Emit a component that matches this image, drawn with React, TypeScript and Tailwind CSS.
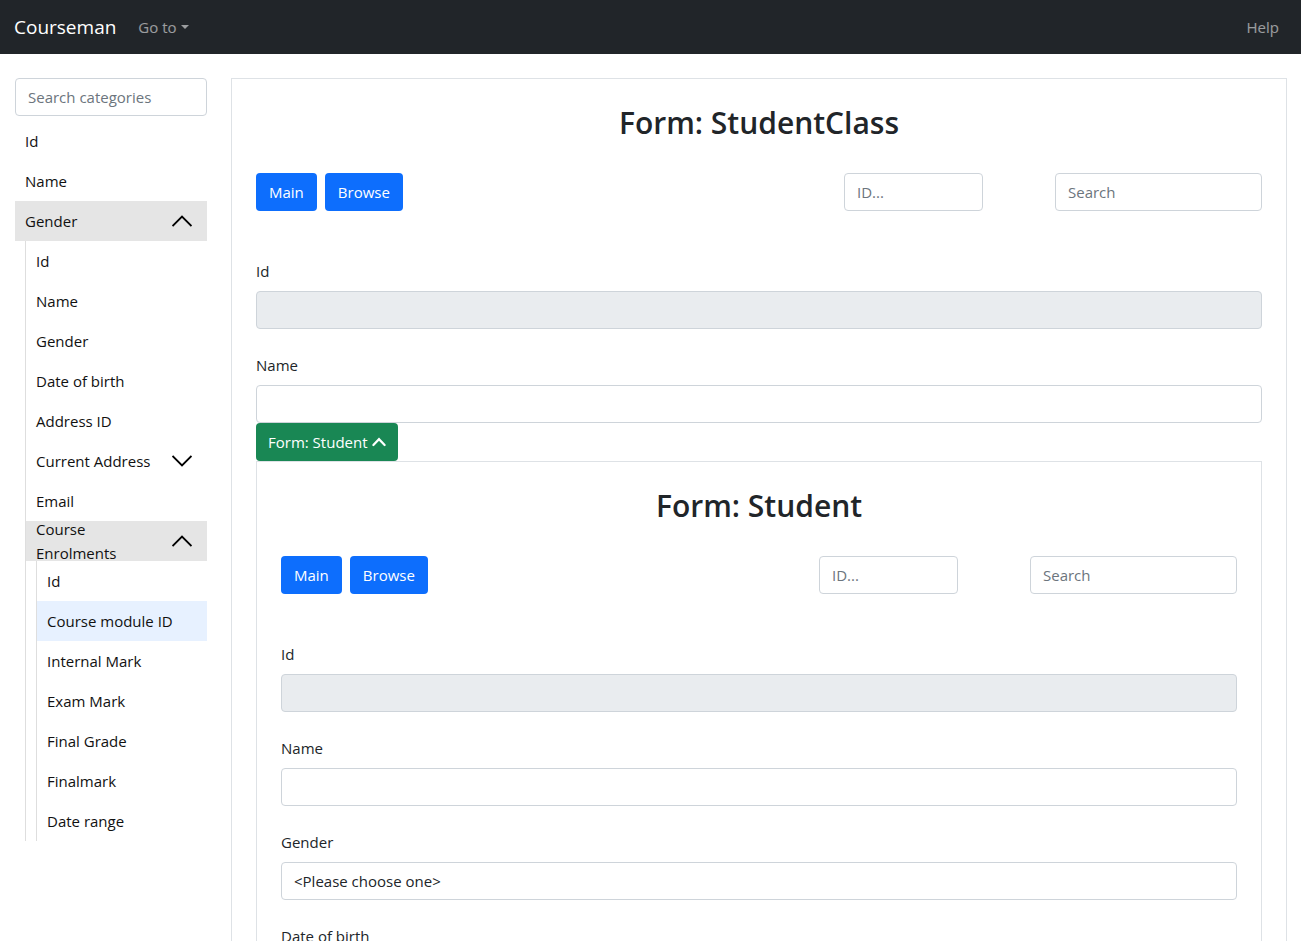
import type { ReactNode } from "react";

const control =
  "block h-[38px] w-full appearance-none rounded border border-[#ced4da] px-3 text-[15px] leading-6 text-[#212529] placeholder:text-[#6c757d]";

function Chevron({ open }: { open: boolean }) {
  return (
    <svg viewBox="0 0 20 20" className="h-5 w-5 shrink-0" fill="none" stroke="#000" strokeWidth="1.9" aria-hidden="true">
      {open ? <path d="M0.5 15 L10 5.5 L19.5 15" /> : <path d="M0.5 5 L10 14.5 L19.5 5" />}
    </svg>
  );
}

function Item({ label, active = false }: { label: string; active?: boolean }) {
  return (
    <li>
      <a href="#" className={`flex h-10 items-center pl-[10px] ${active ? "bg-[#e7f1ff]" : ""}`}>
        {label}
      </a>
    </li>
  );
}

function Group({ label, open = false, children }: { label: string; open?: boolean; children?: ReactNode }) {
  return (
    <li>
      <button
        type="button"
        aria-expanded={open}
        className={`flex h-10 w-full items-center justify-between gap-4 pr-[15px] pl-[10px] text-left leading-6 ${open ? "bg-[#e5e5e5]" : ""}`}
      >
        <span>{label}</span>
        <Chevron open={open} />
      </button>
      {open && <ul className="ml-[10px] border-l border-[#dedede]">{children}</ul>}
    </li>
  );
}

function Sidebar() {
  return (
    <nav className="w-48 shrink-0 text-[15px] leading-6 text-[#111]" aria-label="Categories">
      <input type="text" aria-label="Search categories" placeholder="Search categories" className={control} />
      <ul className="mt-[5px]">
        <Item label="Id" />
        <Item label="Name" />
        <Group label="Gender" open>
          <Item label="Id" />
          <Item label="Name" />
          <Item label="Gender" />
          <Item label="Date of birth" />
          <Item label="Address ID" />
          <Group label="Current Address" />
          <Item label="Email" />
          <Group label="Course Enrolments" open>
            <Item label="Id" />
            <Item label="Course module ID" active />
            <Item label="Internal Mark" />
            <Item label="Exam Mark" />
            <Item label="Final Grade" />
            <Item label="Finalmark" />
            <Item label="Date range" />
          </Group>
        </Group>
      </ul>
    </nav>
  );
}

function PrimaryButton({ children }: { children: ReactNode }) {
  return (
    <button type="button" className="h-[38px] rounded bg-[#0d6efd] px-[13px] text-[15px] leading-6 text-white">
      {children}
    </button>
  );
}

function Field({ id, label, children }: { id: string; label: string; children: ReactNode }) {
  return (
    <div>
      <label htmlFor={id} className="mb-2 block w-fit text-[15px] leading-6">
        {label}
      </label>
      {children}
    </div>
  );
}

function FormPanel({ title, children }: { title: string; children: ReactNode }) {
  return (
    <section className="border border-[#dee2e6] p-6">
      <h2 className="text-center text-[30px] leading-[40px] font-semibold">{title}</h2>
      <div className="mt-[30px] mb-12 flex">
        <div className="flex grow gap-2">
          <PrimaryButton>Main</PrimaryButton>
          <PrimaryButton>Browse</PrimaryButton>
        </div>
        <div className="mr-[72px] w-[139px]">
          <input type="text" aria-label={`${title} ID`} placeholder="ID..." className={control} />
        </div>
        <div className="w-[207px]">
          <input type="text" aria-label={`${title} search`} placeholder="Search" className={control} />
        </div>
      </div>
      {children}
    </section>
  );
}

export default function App() {
  return (
    <div className="min-h-screen bg-white font-['Open_Sans','Noto_Sans',sans-serif] text-[#212529]">
      <header className="flex h-[54px] items-center bg-[#212529] pr-[22px] pl-[14px]">
        <a href="#" className="text-[19px] leading-[30px] text-white">
          Courseman
        </a>
        <button type="button" className="ml-[22px] flex items-center gap-1 text-[15px] leading-6 text-white/55">
          Go to
          <svg viewBox="0 0 8 4" className="h-1 w-2" fill="currentColor" aria-hidden="true">
            <path d="M0 0h8L4 4z" />
          </svg>
        </button>
        <a href="#" className="ml-auto text-[15px] leading-6 text-white/55">
          Help
        </a>
      </header>

      <div className="flex items-start gap-6 pt-6 pr-[14px] pl-[15px]">
        <Sidebar />
        <main className="min-w-0 grow">
          <FormPanel title="Form: StudentClass">
            <div className="flex flex-col gap-6">
              <Field id="class-id" label="Id">
                <input id="class-id" type="text" disabled className={`${control} bg-[#e9ecef]`} />
              </Field>
              <Field id="class-name" label="Name">
                <input id="class-name" type="text" className={control} />
              </Field>
            </div>
            <button
              type="button"
              aria-expanded="true"
              className="flex h-[38px] items-center gap-1 rounded bg-[#198754] px-3 text-[15px] leading-6 text-white"
            >
              Form: Student
              <svg viewBox="0 0 14 14" className="h-[14px] w-[14px]" fill="none" stroke="currentColor" strokeWidth="2.2" strokeLinecap="round" aria-hidden="true">
                <path d="M1.4 10 L7 4.2 L12.6 10" />
              </svg>
            </button>
            <FormPanel title="Form: Student">
              <div className="flex flex-col gap-6">
                <Field id="student-id" label="Id">
                  <input id="student-id" type="text" disabled className={`${control} bg-[#e9ecef]`} />
                </Field>
                <Field id="student-name" label="Name">
                  <input id="student-name" type="text" className={control} />
                </Field>
                <Field id="student-gender" label="Gender">
                  <select id="student-gender" className={control}>
                    <option>&lt;Please choose one&gt;</option>
                  </select>
                </Field>
                <Field id="student-dob" label="Date of birth">
                  <input id="student-dob" type="text" className={control} />
                </Field>
              </div>
            </FormPanel>
          </FormPanel>
        </main>
      </div>
    </div>
  );
}
